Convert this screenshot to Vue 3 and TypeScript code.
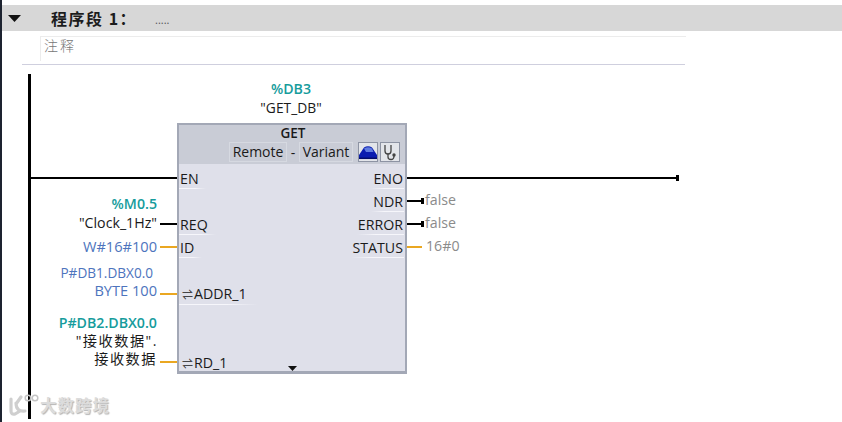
<script setup lang="ts">
interface Label { text: string; x: number; y: number; cls: string }
interface Wire { x: number; y: number; w: number; cls: string }

const labels: Label[] = [
  { text: '%DB3', x: 291, y: 89, cls: 'mid teal' },
  { text: '"GET_DB"', x: 291, y: 108, cls: 'mid dark narrow' },
  { text: '%M0.5', x: 157, y: 204, cls: 'right teal' },
  { text: '"Clock_1Hz"', x: 157, y: 223, cls: 'right dark' },
  { text: 'W#16#100', x: 157, y: 246, cls: 'right blue wide' },
  { text: 'P#DB1.DBX0.0', x: 153, y: 273, cls: 'right blue narrow-more' },
  { text: 'BYTE 100', x: 157, y: 290, cls: 'right blue wide' },
  { text: 'P#DB2.DBX0.0', x: 157, y: 323, cls: 'right teal' },
  { text: '"接收数据".', x: 158, y: 341, cls: 'right dark cjk' },
  { text: '接收数据', x: 157, y: 359, cls: 'right dark cjk' },
  { text: 'false', x: 425, y: 200, cls: 'left grey' },
  { text: 'false', x: 425, y: 223, cls: 'left grey' },
  { text: '16#0', x: 426, y: 246, cls: 'left grey' },
]

const wires: Wire[] = [
  { x: 31, y: 177, w: 146, cls: 'black' },
  { x: 406, y: 177, w: 272, cls: 'black' },
  { x: 160, y: 223, w: 17, cls: 'black' },
  { x: 160, y: 246, w: 17, cls: 'orange' },
  { x: 160, y: 293, w: 17, cls: 'orange' },
  { x: 160, y: 361, w: 17, cls: 'orange' },
  { x: 406, y: 200, w: 18, cls: 'black stub' },
  { x: 406, y: 223, w: 18, cls: 'black stub' },
  { x: 406, y: 246, w: 16, cls: 'orange' },
]

const pinsLeft: { text: string; y: number; w: number }[] = [
  { text: 'EN', y: 178, w: 26 },
  { text: 'REQ', y: 224, w: 36 },
  { text: 'ID', y: 247, w: 22 },
]

const pinsRight: { text: string; y: number; w: number }[] = [
  { text: 'ENO', y: 178, w: 32 },
  { text: 'NDR', y: 201, w: 32 },
  { text: 'ERROR', y: 224, w: 46 },
  { text: 'STATUS', y: 247, w: 52 },
]

function labelStyle(l: Label) {
  return { left: l.x + 'px', top: l.y + 'px' }
}
function wireStyle(w: Wire) {
  return { left: w.x + 'px', top: w.y + 'px', width: w.w + 'px' }
}
function pinStyle(p: { y: number; w: number }) {
  return { top: p.y - 125 + 'px', width: p.w + 'px' }
}
</script>

<template>
  <div class="page">
    <div class="strip"></div>
    <div class="content">
      <div class="net-head">
        <svg class="caret" width="13" height="7" viewBox="0 0 13 7"><path d="M0 0H13L6.5 7Z" fill="#111" /></svg>
        <span class="net-title">程序段 1：</span>
        <span class="net-dots">.....</span>
      </div>
      <div class="comment"><span>注释</span></div>
      <div class="rule"></div>

      <div class="canvas">
        <div class="rail"></div>
        <div v-for="w in wires" :key="w.x + '-' + w.y" class="wire" :class="w.cls" :style="wireStyle(w)"></div>
        <div class="rail-end"></div>
        <span v-for="l in labels" :key="l.text + l.y" class="label" :class="l.cls" :style="labelStyle(l)">{{ l.text }}</span>

        <div class="block">
          <div class="block-head">
            <div class="block-name">GET</div>
            <div class="block-opts">
              <span class="opt opt-remote">Remote</span>
              <span class="dash">-</span>
              <span class="opt opt-variant">Variant</span>
              <span class="tool tool-blue">
                <svg width="18" height="15" viewBox="0 0 18 15">
                  <path d="M0 14 V10 L5 2.500 Q9 0 13 2.500 L18 10 V14 Z" fill="#0a1cb0" />
                  <path d="M5 3.500 Q9 1 13 3.500 L14.500 7 H7 Z" fill="#5f7be0" />
                  <path d="M0 13.300 H18" stroke="#040c6a" stroke-width="1.500" />
                </svg>
              </span>
              <span class="tool">
                <svg width="16" height="17" viewBox="0 0 16 17" fill="none">
                  <path d="M3 1 V7 Q3 10 6 10 Q9 10 9 7 V1" stroke="#444" stroke-width="1.300" />
                  <path d="M6 10 V13 Q6 15.500 9 15.500 Q12 15.500 12 12" stroke="#444" stroke-width="1.300" />
                  <circle cx="12" cy="11" r="1.700" fill="#444" />
                </svg>
              </span>
            </div>
          </div>
          <div v-for="p in pinsLeft" :key="p.text" class="pin pin-l" :style="pinStyle(p)">{{ p.text }}</div>
          <div v-for="p in pinsRight" :key="p.text" class="pin pin-r" :style="pinStyle(p)">{{ p.text }}</div>
          <div class="pin pin-l addr"><span class="swap">⇌</span>ADDR_1</div>
          <div class="pin-plain rd"><span class="swap">⇌</span>RD_1</div>
          <svg class="more" width="9" height="5" viewBox="0 0 9 5"><path d="M0 0H9L4.500 5Z" fill="#111" /></svg>
        </div>

        <div class="mark">
          <svg width="31" height="24" viewBox="0 0 31 24" fill="none">
            <path d="M3 6 V18 Q3 22 7 21 L12 18 M8 10 Q8 19 17 18 M13 4 L8 11" stroke="#cfcfcf" stroke-width="3.200" stroke-linecap="round" />
            <circle cx="20" cy="5" r="2.800" stroke="#c4c4c4" stroke-width="1.500" />
            <circle cx="27" cy="5" r="2.800" stroke="#c4c4c4" stroke-width="1.500" />
          </svg>
          <span>大数跨境</span>
        </div>
      </div>
    </div>
  </div>
</template>

<style>
html, body { margin: 0; background: #fff; }
</style>

<style scoped>
.page {
  width: 842px;
  height: 422px;
  display: flex;
  overflow: hidden;
  background: #fff;
  font-family: "Open Sans", "Noto Sans", "Noto Sans CJK SC", sans-serif;
}
.strip { width: 2px; background: #1d2330; flex: none; }
.content { flex: 1; display: flex; flex-direction: column; padding-top: 5px; min-width: 0; }
.net-head {
  height: 26px;
  background: #d7d7d7;
  display: flex;
  align-items: center;
  padding-left: 6px;
}
.caret { flex: none; }
.net-title {
  margin-left: 30px;
  font-family: "Noto Sans CJK SC", sans-serif;
  font-weight: 700;
  font-size: 16px;
  letter-spacing: 1.5px;
  color: #1c1c1c;
  width: 104px;
  white-space: nowrap;
}
.net-dots { font-size: 11px; color: #555; margin-top: 2px; }
.comment {
  margin: 5px 0 0 38px;
  width: 646px;
  height: 25px;
  box-sizing: border-box;
  border-top: 1px solid #ececec;
  border-left: 1px solid #ececec;
  padding: 0 0 0 3px;
  font-size: 14px;
  line-height: 17px;
  font-family: "Noto Sans CJK SC", sans-serif;
  font-weight: 300;
  letter-spacing: 2px;
  color: #777;
}
.rule {
  margin: 3px 0 0 20px;
  width: 663px;
  height: 1px;
  background: #cfcfde;
  flex: none;
}
.canvas { position: relative; flex: 1; margin-left: -2px; margin-top: -65px; }
.rail { position: absolute; left: 28px; top: 74px; width: 3px; height: 345px; background: #000; }
.wire { position: absolute; height: 2px; }
.black { background: #000; }
.orange { background: #eaa721; }
.stub::after {
  content: "";
  position: absolute;
  right: 0;
  top: -2px;
  width: 3px;
  height: 6px;
  background: #000;
}
.rail-end { position: absolute; left: 676px; top: 175px; width: 3px; height: 6px; background: #000; }
.label {
  position: absolute;
  font-size: 14.2px;
  line-height: 18px;
  white-space: nowrap;
  transform: translateY(-50%);
}
.mid { transform: translate(-50%, -50%); }
.right { transform: translate(-100%, -50%); }
.teal { color: #169c9c; font-weight: 600; }
.dark { color: #1a1a1a; }
.blue { color: #4d74bd; }
.grey { color: #8b8b8b; }
.narrow { font-size: 13.8px; }
.narrow-more { font-size: 13.6px; }
.wide { font-size: 14.6px; }
.cjk { letter-spacing: 1.500px; font-family: "Open Sans", "Noto Sans CJK SC", sans-serif; font-weight: 400; }
.block {
  position: absolute;
  left: 177px;
  top: 123px;
  width: 230px;
  height: 251px;
  box-sizing: border-box;
  border: 2px solid #a3a8b6;
  border-bottom-width: 3px;
  background: #dfe0ea;
  font-size: 14.2px;
  color: #1a1a1a;
}
.block-head {
  height: 39px;
  background: #c9ccd6;
  display: flex;
  flex-direction: column;
  align-items: center;
}
.block-name { font-weight: 600; font-size: 13.5px; line-height: 17px; margin-left: 2px; }
.block-opts {
  align-self: flex-end;
  display: flex;
  align-items: center;
  height: 20px;
  padding-right: 5px;
}
.opt {
  border: 1px solid #d6d9e1;
  line-height: 18px;
  height: 20px;
  box-sizing: border-box;
  text-align: center;
  font-size: 14px;
}
.opt-remote { width: 58px; }
.opt-variant { width: 54px; }
.dash { width: 12px; text-align: center; }
.tool {
  width: 20px;
  height: 20px;
  margin-left: 2px;
  box-sizing: border-box;
  border: 1px solid #8d93a3;
  background: #e3e5ea;
  display: flex;
  align-items: center;
  justify-content: center;
}
.tool-blue { margin-left: 5px; }
.pin {
  position: absolute;
  height: 22px;
  line-height: 23px;
  transform: translateY(-50%);
  white-space: nowrap;
}
.pin-l {
  left: 0;
  padding-left: 1px;
  background: linear-gradient(to right, #f6f6fb 60%, transparent) bottom left / 100% 1px no-repeat;
}
.pin-r {
  right: 1px;
  text-align: right;
  padding-right: 1px;
  background: linear-gradient(to left, #f6f6fb 60%, transparent) bottom right / 100% 1px no-repeat;
}
.addr { top: 169px; width: 76px; padding-left: 3px; line-height: 21px; }
.swap { font-size: 11px; margin-right: 1px; }
.pin-plain { position: absolute; left: 3px; top: 229px; line-height: 18px; }
.more { position: absolute; left: 109px; top: 241px; }
.mark {
  position: absolute;
  left: 8px;
  top: 393px;
  display: flex;
  align-items: center;
  gap: 1px;
  font-family: "Noto Sans CJK SC", sans-serif;
  font-weight: 700;
  font-size: 16.500px;
  letter-spacing: 1px;
  color: #dcdcdc;
  text-shadow: 1px 1px 1px #b5b5b5;
}
</style>
